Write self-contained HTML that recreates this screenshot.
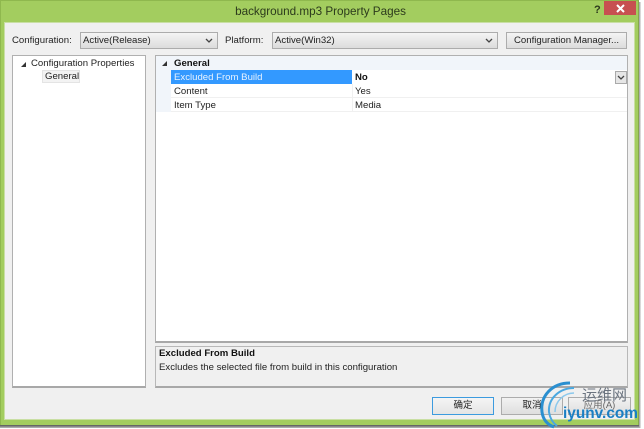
<!DOCTYPE html>
<html><head><meta charset="utf-8">
<style>
html,body{margin:0;padding:0;background:#fff}
#r{position:relative;width:644px;height:429px;overflow:hidden;background:#fff;font-family:"Liberation Sans","Noto Sans CJK SC",sans-serif;font-size:9.6px;color:#222;line-height:14px;filter:blur(.3px)}
#r div{position:absolute;box-sizing:border-box;white-space:nowrap}
.combo{background:linear-gradient(#f4f4f4,#dcdcdc);border:1px solid #acacac;height:17px;line-height:16px;padding-left:2px;top:32px}
.chev{position:absolute}
.panel{background:#fff;border:1px solid #b0b0b0;border-bottom:2px solid #a8a8a8}
.btn{background:linear-gradient(#f2f2f2,#dedede);border:1px solid #acacac;text-align:center;height:18px;top:397px;line-height:16px;color:#222;font-size:9.5px}
.t{position:absolute}
</style></head><body>
<div id="r">
<div style="left:0;top:0;width:639px;height:426px;background:#a3cd5f;border:1px solid #8fb84e;border-right-color:#86a84c"></div>
<div style="left:0;top:425px;width:640px;height:3px;background:linear-gradient(#555,#bbb)"></div>
<div style="left:639px;top:2px;width:2px;height:426px;background:linear-gradient(90deg,#999,#eee)"></div>
<div style="left:4px;top:22px;width:631px;height:398px;background:#f0f0f0;border:1px solid #c9dfa4"></div>
<div class="t" style="left:0;width:641px;top:4px;text-align:center;font-size:11.7px;color:#2c3a1c;line-height:15px">background.mp3 Property Pages</div>
<div class="t" style="left:594px;top:3px;font-weight:bold;font-size:11px;color:#2c3a1c;line-height:14px">?</div>
<div style="left:604px;top:1px;width:32px;height:14px;background:#c75050"></div>
<svg style="position:absolute;left:616px;top:4px" width="9" height="9"><path d="M1 1L8 8M8 1L1 8" stroke="#fff" stroke-width="2"/></svg>

<div class="t" style="left:12px;top:34px">Configuration:</div>
<div class="combo" style="left:80px;width:138px">Active(Release)
<svg class="chev" style="right:4px;top:5px" width="8" height="6"><path d="M1 1L4 4L7 1" stroke="#444" stroke-width="1.3" fill="none"/></svg></div>
<div class="t" style="left:225px;top:34px">Platform:</div>
<div class="combo" style="left:272px;width:226px">Active(Win32)
<svg class="chev" style="right:4px;top:5px" width="8" height="6"><path d="M1 1L4 4L7 1" stroke="#444" stroke-width="1.3" fill="none"/></svg></div>
<div class="combo" style="left:506px;width:121px;padding:0;text-align:center">Configuration Manager...</div>

<div class="panel" style="left:12px;top:55px;width:134px;height:333px"></div>
<svg style="position:absolute;left:20px;top:61px" width="7" height="7"><path d="M1 6H6V1Z" fill="#333"/></svg>
<div class="t" style="left:31px;top:57px">Configuration Properties</div>
<div style="left:42px;top:70px;width:38px;height:13px;background:#f3f3f3;border:1px solid #e4e4e4"></div>
<div class="t" style="left:45px;top:70px">General</div>

<div class="panel" style="left:155px;top:55px;width:473px;height:288px"></div>
<div style="left:156px;top:56px;width:471px;height:14px;background:#f1f5fa"></div>
<div style="left:156px;top:70px;width:15px;height:42px;background:#f1f5fa"></div>
<svg style="position:absolute;left:161px;top:60px" width="7" height="7"><path d="M1 6H6V1Z" fill="#333"/></svg>
<div class="t" style="left:174px;top:57px;font-weight:bold;color:#111">General</div>
<div style="left:171px;top:70px;width:181px;height:14px;background:#3399ff"></div>
<div class="t" style="left:174px;top:71px;color:#e8f3ff">Excluded From Build</div>
<div class="t" style="left:355px;top:71px;font-weight:bold;color:#111">No</div>
<div style="left:615px;top:71px;width:12px;height:13px;background:#e6e6e6;border:1px solid #aaa"></div>
<svg style="position:absolute;left:617px;top:75px" width="8" height="6"><path d="M1 1L4 4L7 1" stroke="#444" stroke-width="1.3" fill="none"/></svg>
<div style="left:171px;top:97px;width:456px;height:1px;background:#f0f0f0"></div>
<div style="left:171px;top:111px;width:456px;height:1px;background:#f0f0f0"></div>
<div style="left:352px;top:84px;width:1px;height:28px;background:#f0f0f0"></div>
<div class="t" style="left:174px;top:85px">Content</div>
<div class="t" style="left:355px;top:85px">Yes</div>
<div class="t" style="left:174px;top:99px">Item Type</div>
<div class="t" style="left:355px;top:99px">Media</div>

<div style="left:155px;top:346px;width:473px;height:42px;background:#f0f0f0;border:1px solid #b8b8b8;border-bottom:2px solid #a8a8a8"></div>
<div class="t" style="left:159px;top:347px;font-weight:bold;color:#111">Excluded From Build</div>
<div class="t" style="left:159px;top:361px">Excludes the selected file from build in this configuration</div>

<div class="btn" style="left:432px;width:62px;border:1px solid #3c9bdf;background:linear-gradient(#f4f4f4,#e4e4e4)">确定</div>
<div class="btn" style="left:501px;width:62px">取消</div>
<div class="btn" style="left:568px;width:63px;color:#666">应用(A)</div>

<svg style="position:absolute;left:538px;top:380px" width="60" height="50" fill="none">
<path d="M32 3C14 3 2 16 4 32C5 40 10 45 16 47" stroke="#2a8fd0" stroke-width="3"/>
<path d="M36 8C22 8 10 18 11 32C12 39 15 43 19 46" stroke="#4aa8e0" stroke-width="2"/>
<path d="M36 13C26 13 17 21 17 32" stroke="#8cc8ec" stroke-width="1.5"/>
</svg>
<div class="t" style="left:582px;top:386px;font-size:15px;line-height:18px;color:#6b7480;font-family:'Noto Sans CJK SC',sans-serif">运维网</div>
<div class="t" style="left:563px;top:405px;font-size:15.4px;line-height:18px;font-weight:bold;color:#1a7fc4">iyunv.com</div>
</div>
</body></html>
